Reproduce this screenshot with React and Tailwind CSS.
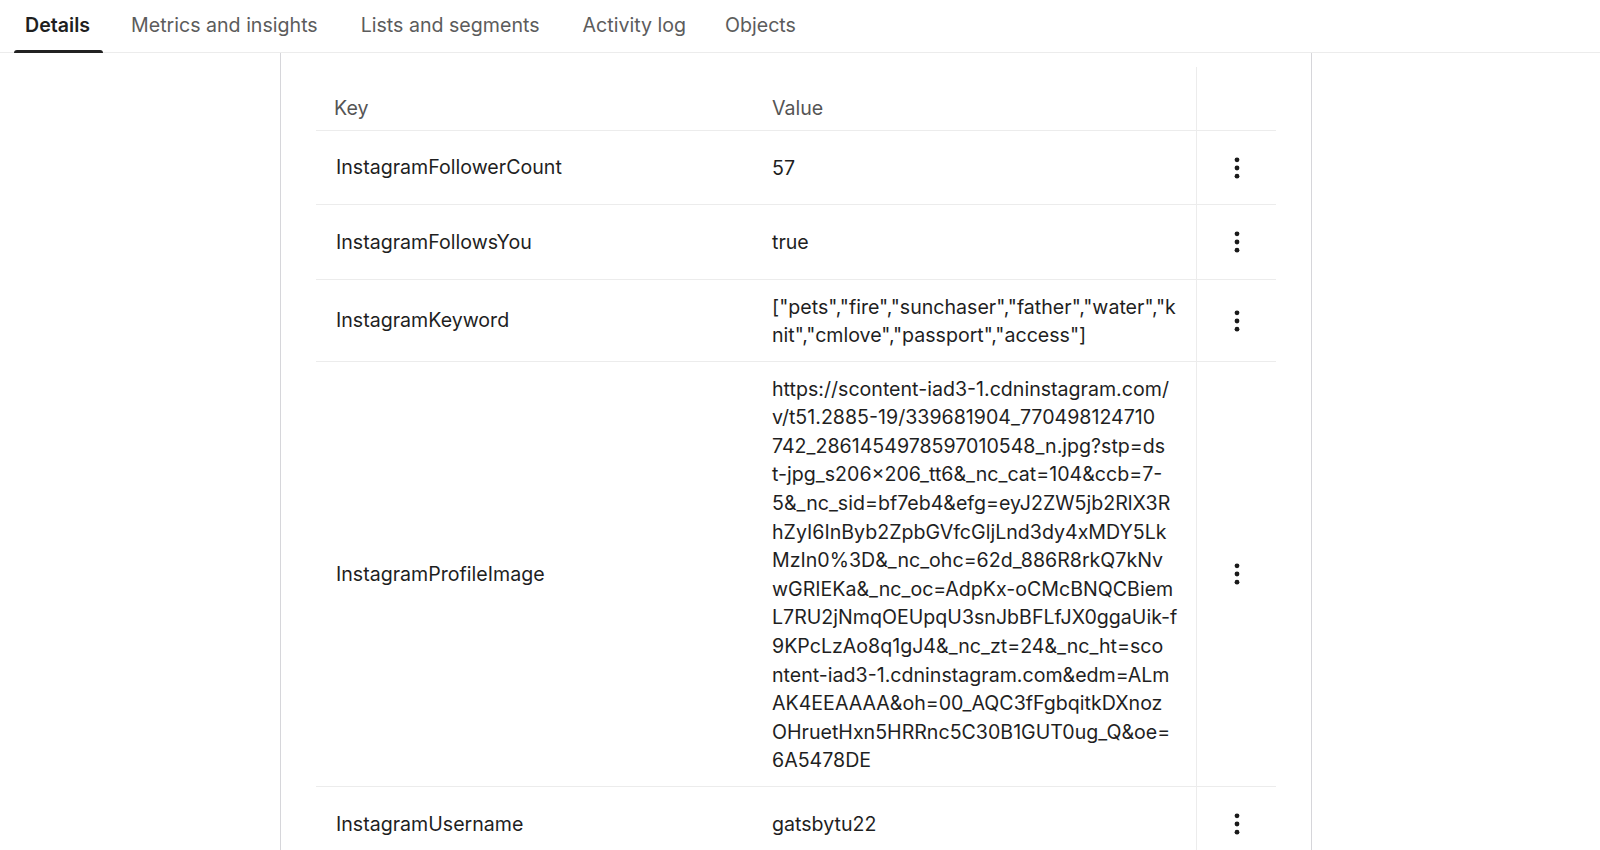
import { useState } from "react"

const tabs = ["Details", "Metrics and insights", "Lists and segments", "Activity log", "Objects"]
const tabGaps = ["", "ml-[17px] ", "ml-[21px] ", "ml-[21px] ", "ml-[17px] "]

const rows = [
  { key: "InstagramFollowerCount", value: ["57"] },
  { key: "InstagramFollowsYou", value: ["true"] },
  {
    key: "InstagramKeyword",
    value: ['["pets","fire","sunchaser","father","water","k', 'nit","cmlove","passport","access"]'],
  },
  {
    key: "InstagramProfileImage",
    value: [
      "https://scontent-iad3-1.cdninstagram.com/",
      "v/t51.2885-19/339681904_770498124710",
      "742_2861454978597010548_n.jpg?stp=ds",
      "t-jpg_s206x206_tt6&_nc_cat=104&ccb=7-",
      "5&_nc_sid=bf7eb4&efg=eyJ2ZW5jb2RlX3R",
      "hZyI6InByb2ZpbGVfcGljLnd3dy4xMDY5Lk",
      "MzIn0%3D&_nc_ohc=62d_886R8rkQ7kNv",
      "wGRIEKa&_nc_oc=AdpKx-oCMcBNQCBiem",
      "L7RU2jNmqOEUpqU3snJbBFLfJX0ggaUik-f",
      "9KPcLzAo8q1gJ4&_nc_zt=24&_nc_ht=sco",
      "ntent-iad3-1.cdninstagram.com&edm=ALm",
      "AK4EEAAAA&oh=00_AQC3fFgbqitkDXnoz",
      "OHruetHxn5HRRnc5C30B1GUT0ug_Q&oe=",
      "6A5478DE",
    ],
  },
  { key: "InstagramUsername", value: ["gatsbytu22"] },
]

function Dots() {
  return (
    <svg width="6" height="24" viewBox="0 0 6 24" className="text-[#1a1a1a]">
      <circle cx="3" cy="3.8" r="2.4" fill="currentColor" />
      <circle cx="3" cy="12" r="2.4" fill="currentColor" />
      <circle cx="3" cy="20.2" r="2.4" fill="currentColor" />
    </svg>
  )
}

export default function App() {
  const [active, setActive] = useState("Details")

  return (
    <div className="h-[850px] overflow-hidden bg-white font-['Inter',sans-serif] text-[19.6px] text-[#1f1f1f]">
      <div className="flex h-[53px] items-stretch border-b border-[#ececec] pl-[14px]">
        {tabs.map((t, i) => (
          <button
            key={t}
            onClick={() => setActive(t)}
            className={
              "relative pb-[1px] " +
              (i === 0 ? "pl-[11px] pr-[13px] " : "px-[11px] ") +
              tabGaps[i] +
              (active === t ? "font-semibold text-[#1f1f1f]" : "text-[#5c5c5c]")
            }
          >
            {t}
            {active === t && <span className="absolute bottom-[-1px] left-0 right-0 h-[3px] rounded-t-sm bg-[#222]" />}
          </button>
        ))}
      </div>

      <div className="ml-[280px] h-[800px] w-[1032px] border-x-[1.5px] border-[#d6d6da] px-[35px] pt-[14px]">
        <div className="grid grid-cols-[443px_437px_80px] leading-[28.6px]">
          <div className="flex h-[63.5px] items-end border-b border-[#ececec] pb-[7px] pl-[18px] text-[#555]">Key</div>
          <div className="flex h-[63.5px] items-end border-b border-[#ececec] pb-[7px] pl-[13px] text-[#555]">Value</div>
          <div className="h-[63.5px] border-b border-l border-[#ececec]" />

          {rows.map((r) => (
            <div key={r.key} className="contents">
              <div className="flex min-h-[74.5px] items-center border-b border-[#ececec] pl-[20px] pt-[1px]">{r.key}</div>
              <div className="flex min-h-[74.5px] flex-col justify-center border-b border-[#ececec] pb-[11px] pl-[13px] pt-[13px]">
                {r.value.map((line, i) => (
                  <span key={i} className="whitespace-nowrap">
                    {line}
                  </span>
                ))}
              </div>
              <div className="flex items-center justify-center border-b border-l border-[#ececec] pl-[1px] pt-[1px]">
                <Dots />
              </div>
            </div>
          ))}
        </div>
      </div>
    </div>
  )
}
